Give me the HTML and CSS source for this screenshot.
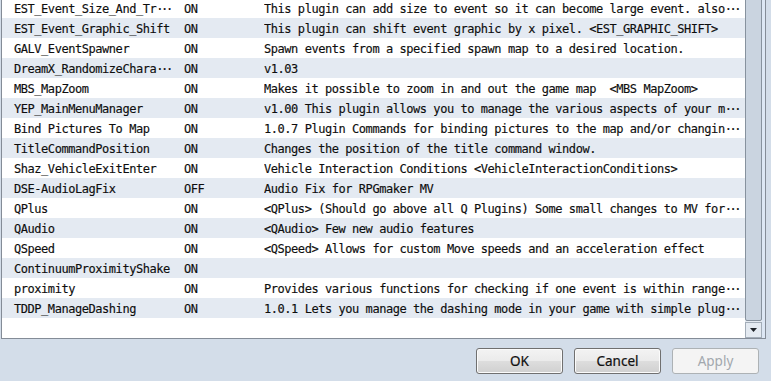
FILE: index.html
```html
<!DOCTYPE html>
<html>
<head>
<meta charset="utf-8">
<link rel="stylesheet" href="styles.css">
</head>
<body>
<div class="dialog">
  <div class="list">
    <div class="rows">
      <div class="row"><span class="c-name">EST_Event_Size_And_Tr<span class="ell">···</span></span><span class="c-status">ON</span><span class="c-desc">This plugin can add size to event so it can become large event. also<span class="ell">···</span></span></div>
      <div class="row"><span class="c-name">EST_Event_Graphic_Shift</span><span class="c-status">ON</span><span class="c-desc">This plugin can shift event graphic by x pixel. &lt;EST_GRAPHIC_SHIFT&gt;</span></div>
      <div class="row"><span class="c-name">GALV_EventSpawner</span><span class="c-status">ON</span><span class="c-desc">Spawn events from a specified spawn map to a desired location.</span></div>
      <div class="row"><span class="c-name">DreamX_RandomizeChara<span class="ell">···</span></span><span class="c-status">ON</span><span class="c-desc">v1.03</span></div>
      <div class="row"><span class="c-name">MBS_MapZoom</span><span class="c-status">ON</span><span class="c-desc">Makes it possible to zoom in and out the game map  &lt;MBS MapZoom&gt;</span></div>
      <div class="row"><span class="c-name">YEP_MainMenuManager</span><span class="c-status">ON</span><span class="c-desc">v1.00 This plugin allows you to manage the various aspects of your m<span class="ell">···</span></span></div>
      <div class="row"><span class="c-name">Bind Pictures To Map</span><span class="c-status">ON</span><span class="c-desc">1.0.7 Plugin Commands for binding pictures to the map and/or changin<span class="ell">···</span></span></div>
      <div class="row"><span class="c-name">TitleCommandPosition</span><span class="c-status">ON</span><span class="c-desc">Changes the position of the title command window.</span></div>
      <div class="row"><span class="c-name">Shaz_VehicleExitEnter</span><span class="c-status">ON</span><span class="c-desc">Vehicle Interaction Conditions &lt;VehicleInteractionConditions&gt;</span></div>
      <div class="row"><span class="c-name">DSE-AudioLagFix</span><span class="c-status">OFF</span><span class="c-desc">Audio Fix for RPGmaker MV</span></div>
      <div class="row"><span class="c-name">QPlus</span><span class="c-status">ON</span><span class="c-desc">&lt;QPlus&gt; (Should go above all Q Plugins) Some small changes to MV for<span class="ell">···</span></span></div>
      <div class="row"><span class="c-name">QAudio</span><span class="c-status">ON</span><span class="c-desc">&lt;QAudio&gt; Few new audio features</span></div>
      <div class="row"><span class="c-name">QSpeed</span><span class="c-status">ON</span><span class="c-desc">&lt;QSpeed&gt; Allows for custom Move speeds and an acceleration effect</span></div>
      <div class="row"><span class="c-name">ContinuumProximityShake</span><span class="c-status">ON</span><span class="c-desc"></span></div>
      <div class="row"><span class="c-name">proximity</span><span class="c-status">ON</span><span class="c-desc">Provides various functions for checking if one event is within range<span class="ell">···</span></span></div>
      <div class="row"><span class="c-name">TDDP_ManageDashing</span><span class="c-status">ON</span><span class="c-desc">1.0.1 Lets you manage the dashing mode in your game with simple plug<span class="ell">···</span></span></div>
    </div>
    <div class="vscroll">
      <div class="thumb"></div>
      <div class="arrow-down">
        <svg width="7" height="4" viewBox="0 0 7 4"><path d="M0 0 H7 L3.5 4 Z" fill="#1e2328"/></svg>
      </div>
    </div>
    <div class="edge"></div>
  </div>
  <div class="buttons">
    <button class="btn">OK</button>
    <button class="btn">Cancel</button>
    <button class="btn disabled">Apply</button>
  </div>
</div>
</body>
</html>
```

FILE: styles.css
```css
html, body {
  margin: 0;
  padding: 0;
}
body {
  width: 771px;
  height: 381px;
  overflow: hidden;
  background: #d3dde9;
  font-family: "DejaVu Sans Mono", monospace;
}
.dialog {
  display: flex;
  flex-direction: column;
  padding-left: 1px;
  width: 765px;
}
.list {
  display: flex;
  height: 341px;
  margin-top: -2px;
  box-sizing: border-box;
  background: #ffffff;
  border-left: 1px solid #848c97;
  border-bottom: 1px solid #848c97;
  border-right: 1px solid #848c97;
}
.rows {
  flex: 1;
  overflow: hidden;
}
.row {
  display: flex;
  height: 20px;
  box-sizing: border-box;
  padding-top: 3px;
  line-height: 17px;
  font-size: 12px;
  letter-spacing: -0.45px;
  color: #0e0e0e;
  white-space: pre;
  -webkit-text-stroke: 0.15px #0e0e0e;
}
.row:nth-child(even) {
  background: #e4eaf2;
}
.c-name {
  width: 170px;
  padding-left: 12px;
  overflow: hidden;
}
.c-status {
  width: 80px;
}
.c-desc {
  flex: 1;
  overflow: hidden;
}
.ell {
  letter-spacing: -2.4px;
}
.vscroll {
  width: 17px;
  display: flex;
  flex-direction: column;
  background: #e3e9f0;
}
.thumb {
  flex: 1;
  margin-top: -2px;
  border: 1px solid #87929e;
  border-radius: 2px;
  background: #cad4e0;
}
.arrow-down {
  height: 16px;
  box-sizing: border-box;
  margin-top: 1px;
  border: 1px solid #a3adb8;
  background: #e4eaf1;
  display: flex;
  align-items: center;
  justify-content: center;
}
.edge {
  width: 3px;
  background: #dde7f4;
}
.buttons {
  display: flex;
  justify-content: flex-end;
  gap: 11px;
  padding-top: 9px;
  padding-right: 7px;
}
.btn {
  width: 87px;
  height: 26px;
  box-sizing: border-box;
  border: 1px solid #707070;
  border-radius: 3px;
  background: linear-gradient(#f3f3f3 0%, #ebebeb 48%, #dddddd 52%, #d0d0d0 100%);
  box-shadow: inset 0 0 0 1px #fbfbfb;
  font-family: "Noto Sans", "Open Sans", sans-serif;
  font-size: 13.5px;
  color: #101010;
  -webkit-text-stroke: 0.2px #101010;
  padding: 0;
}
.btn.disabled {
  border-color: #adb2b5;
  background: #f4f4f4;
  box-shadow: none;
  color: #a2a8ae;
  -webkit-text-stroke: 0;
}
```
